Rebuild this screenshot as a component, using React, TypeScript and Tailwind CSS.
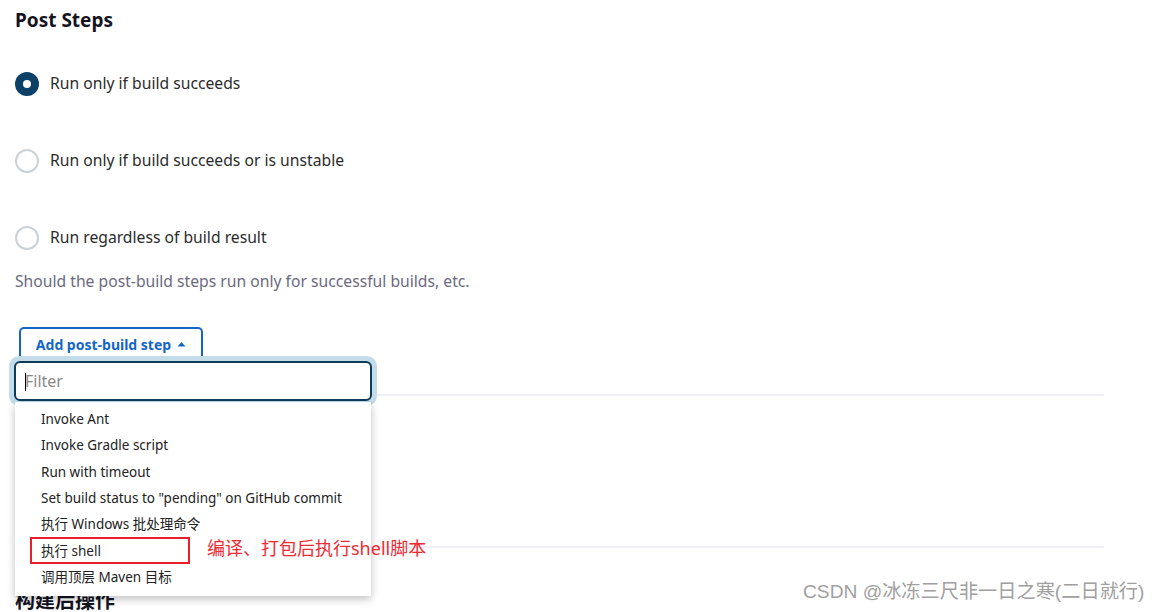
const font = "font-['Noto_Sans','Noto_Sans_CJK_SC',sans-serif]";

const options = [
  "Invoke Ant",
  "Invoke Gradle script",
  "Run with timeout",
  'Set build status to "pending" on GitHub commit',
  "执行 Windows 批处理命令",
  "执行 shell",
  "调用顶层 Maven 目标",
];

function Radio({ checked, label }: { checked?: boolean; label: string }) {
  return (
    <label className="flex h-[24px] items-center gap-[11px]">
      {checked ? (
        <span className="flex h-[24px] w-[24px] items-center justify-center rounded-full bg-[#0c4066]">
          <span className="h-[8px] w-[8px] rounded-full bg-white" />
        </span>
      ) : (
        <span className="h-[24px] w-[24px] rounded-full border-2 border-[#c9d2d8] bg-white" />
      )}
      <span className="text-[15.7px] text-[#2b2b2b]">{label}</span>
    </label>
  );
}

export default function App() {
  return (
    <div className={`relative h-[612px] w-[1159px] overflow-hidden bg-white ${font}`}>
      <div className="w-[1104px] pl-[15px]">
        <h2 className="pt-[6px] text-[19px] leading-[28px] font-bold text-[#14141f]">Post Steps</h2>

        <div className="mt-[38px] flex flex-col gap-[53px]">
          <Radio checked label="Run only if build succeeds" />
          <Radio label="Run only if build succeeds or is unstable" />
          <Radio label="Run regardless of build result" />
        </div>

        <p className="mt-[19px] text-[15.7px] leading-[24px] text-[#6c6a80]">
          Should the post-build steps run only for successful builds, etc.
        </p>

        <div className="relative mt-[34px] ml-[4px]">
          <button className="flex h-[34px] w-[184px] items-center justify-center gap-[6px] rounded-[5px] border-2 border-[#1466c6] text-[14px] font-bold text-[#1466c6]">
            Add post-build step
            <svg width="9" height="6" viewBox="0 0 9 6" className="mt-[-1px]">
              <path d="M0.5 5.5 L4.5 1 L8.5 5.5 Z" fill="#1466c6" />
            </svg>
          </button>
        </div>

        <div className="mt-[33px] h-[2px] bg-[#eef0f5]" />
        <div className="mt-[150px] h-[2px] bg-[#eef0f5]" />
        <h2 className="mt-[39px] text-[20px] leading-[28px] font-bold text-[#14141f]">构建后操作</h2>
      </div>

      {/* dropdown menu */}
      <div className="absolute top-[356px] left-[9px] w-[368px]">
        <div className="rounded-[10px] bg-[#c4dcea] p-[5px]">
          <div className="relative flex h-[40px] items-center rounded-[6px] border-2 border-[#0c3b5c] bg-white pl-[9px]">
            <span className="absolute top-[10px] left-[9px] h-[18px] w-[1px] bg-black" />
            <input
              placeholder="Filter"
              className="w-full bg-transparent text-[16px] text-[#333] outline-none placeholder:text-[#8a8a8a]"
            />
          </div>
        </div>
        <ul className="mx-[6px] -mt-[4px] bg-white pt-[4px] pb-[6px] shadow-[0_3px_8px_rgba(0,0,0,0.25)]">
          {options.map((o) => (
            <li key={o} className="flex h-[26.3px] items-center pl-[26px] text-[13.5px] text-[#222]">
              {o}
            </li>
          ))}
        </ul>
      </div>

      {/* annotation */}
      <div className="absolute top-[537px] left-[30px] h-[27px] w-[160px] border-2 border-[#e61f2b]" />
      <div className="absolute top-[535px] left-[207px] text-[18px] leading-[26px] text-[#ee2a33]">
        编译、打包后执行shell脚本
      </div>

      <div className="absolute top-[579px] left-[803px] font-['Liberation_Sans','Noto_Sans_CJK_SC',sans-serif] text-[19.2px] leading-[26px] text-[#a0a0a0]">
        CSDN @冰冻三尺非一日之寒(二日就行)
      </div>
    </div>
  );
}
